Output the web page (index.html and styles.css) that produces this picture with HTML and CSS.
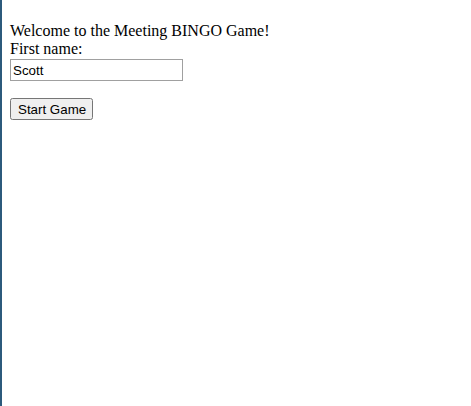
FILE: index.html
```html
<!DOCTYPE html>
<html>
<head>
<meta charset="utf-8">
<link rel="stylesheet" href="styles.css">
</head>
<body>
<div class="page">
  <div class="game">
    <div class="welcome">Welcome to the Meeting BINGO Game!</div>
    <form class="signin">
      <label class="label" for="fname">First name:</label>
      <input class="name-input" type="text" id="fname" value="Scott">
      <button class="start" type="button">Start Game</button>
    </form>
  </div>
</div>
</body>
</html>
```
FILE: styles.css
```css
html, body {
  margin: 0;
  padding: 0;
  height: 100%;
  background: #ffffff;
}
.page {
  box-sizing: border-box;
  min-height: 100%;
  border-left: 2px solid #2c5a7c;
  padding: 22px 8px 8px 8px;
  font-family: "Liberation Serif", "Times New Roman", serif;
  font-size: 16px;
  line-height: 18px;
  color: #000;
}
.signin {
  margin: 0;
  display: flex;
  flex-direction: column;
  align-items: flex-start;
}
.label {
  display: block;
}
.name-input {
  font-family: "Liberation Sans", Arial, sans-serif;
  font-size: 13.333px;
  width: 173px;
  box-sizing: border-box;
  height: 22px;
  border: 1px solid #a0a0a0;
  padding: 1px 2px;
  margin: 1px 0 0 0;
}
.start {
  font-family: "Liberation Sans", Arial, sans-serif;
  font-size: 13.333px;
  line-height: normal;
  box-sizing: border-box;
  height: 22px;
  padding: 1px 5px 1px 6px;
  margin: 17px 0 0 0;
}
```
